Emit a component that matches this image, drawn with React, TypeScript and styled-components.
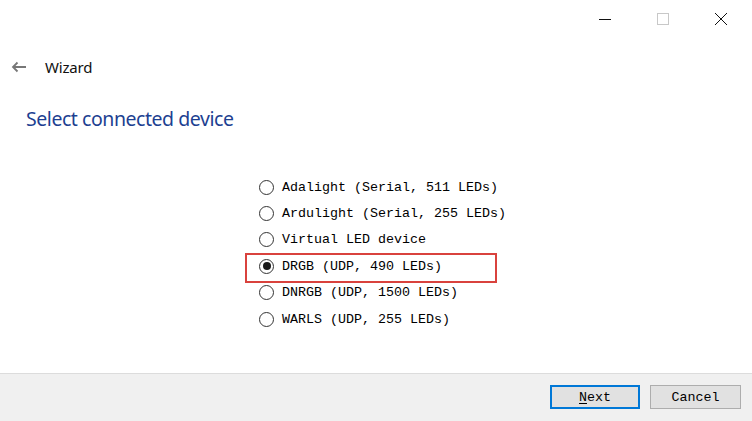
import React, { useState } from 'react'
import styled, { createGlobalStyle } from 'styled-components'

const GlobalStyle = createGlobalStyle`
	html, body {
		margin: 0;
		padding: 0;
		background: #ffffff;
	}
	#root {
		height: 100vh;
	}
`

const Window = styled.div`
	height: 421px;
	width: 752px;
	display: flex;
	flex-direction: column;
	background: #ffffff;
	font-family: 'Noto Sans', 'Open Sans', sans-serif;
	overflow: hidden;
`

const TitleBar = styled.div`
	height: 38px;
	display: flex;
	justify-content: flex-end;
	align-items: center;
	padding-right: 2px;
`

const CaptionButton = styled.div`
	width: 58px;
	height: 38px;
	display: flex;
	align-items: center;
	justify-content: center;
`

const Header = styled.div`
	display: flex;
	align-items: center;
	height: 22px;
	margin-top: 18px;
	padding-left: 10px;
`

const BackIcon = styled.div`
	width: 18px;
	height: 18px;
	display: flex;
	align-items: center;
	justify-content: center;
	margin-right: 17px;
`

const HeaderTitle = styled.div`
	font-size: 15px;
	color: #111;
	letter-spacing: -0.2px;
`

const PageTitle = styled.h1`
	margin: 28px 0 0 26px;
	font-size: 19.5px;
	font-weight: 400;
	color: #1d3f91;
	line-height: 26px;
	letter-spacing: -0.45px;
`

const Content = styled.div`
	flex: 1;
	display: flex;
	flex-direction: column;
	padding: 42px 0 0 259px;
`

const Row = styled.label<{ $highlight?: boolean }>`
	position: relative;
	display: flex;
	align-items: center;
	height: 26.4px;
	font-family: 'Liberation Mono', 'Courier New', monospace;
	font-size: 13.33px;
	color: #000;
	cursor: default;

	${(p) =>
		p.$highlight &&
		`
		&::after {
			content: '';
			position: absolute;
			left: -14px;
			top: 0px;
			width: 252px;
			height: 30px;
			box-sizing: border-box;
			border: 2px solid #d9423d;
			pointer-events: none;
		}
	`}
`

const Radio = styled.span<{ $checked?: boolean }>`
	width: 15px;
	height: 15px;
	box-sizing: border-box;
	border: 1px solid #333;
	border-radius: 50%;
	margin-right: 8px;
	display: flex;
	align-items: center;
	justify-content: center;
	flex-shrink: 0;

	&::before {
		content: '';
		width: 8px;
		height: 8px;
		border-radius: 50%;
		background: ${(p) => (p.$checked ? '#1a1a1a' : 'transparent')};
	}
`

const Footer = styled.div`
	height: 48px;
	box-sizing: border-box;
	border-top: 1px solid #dcdcdc;
	background: #f0f0f0;
	display: flex;
	justify-content: flex-end;
	align-items: flex-start;
	gap: 10px;
	padding: 11px 11px 0 0;
`

const Button = styled.button<{ $default?: boolean }>`
	width: ${(p) => (p.$default ? '90px' : '91px')};
	height: 24px;
	box-sizing: border-box;
	background: #e1e1e1;
	border: ${(p) => (p.$default ? '2px solid #0078d7' : '1px solid #adadad')};
	font-family: 'Liberation Mono', 'Courier New', monospace;
	font-size: 13.33px;
	color: #000;
	padding: 0;
	border-radius: 0;

	u {
		text-underline-offset: 2px;
	}
`

const devices = [
	'Adalight (Serial, 511 LEDs)',
	'Ardulight (Serial, 255 LEDs)',
	'Virtual LED device',
	'DRGB (UDP, 490 LEDs)',
	'DNRGB (UDP, 1500 LEDs)',
	'WARLS (UDP, 255 LEDs)',
]

export default function App() {
	const [selected, setSelected] = useState(3)

	return (
		<Window>
			<GlobalStyle />
			<TitleBar>
				<CaptionButton>
					<svg width="14" height="14" viewBox="0 0 14 14">
						<line x1="1" y1="7.5" x2="13" y2="7.5" stroke="#111" strokeWidth="1" />
					</svg>
				</CaptionButton>
				<CaptionButton>
					<svg width="14" height="14" viewBox="0 0 14 14">
						<rect x="1.5" y="1.5" width="11" height="11" fill="none" stroke="#c8c8c8" strokeWidth="1" />
					</svg>
				</CaptionButton>
				<CaptionButton>
					<svg width="14" height="14" viewBox="0 0 14 14">
						<path d="M1 1 L13 13 M13 1 L1 13" stroke="#111" strokeWidth="1" />
					</svg>
				</CaptionButton>
			</TitleBar>

			<Header>
				<BackIcon>
					<svg width="16" height="12" viewBox="0 0 16 12">
						<path d="M15 6 H2 M6.5 1.5 L2 6 L6.5 10.5" fill="none" stroke="#777" strokeWidth="1.8" />
					</svg>
				</BackIcon>
				<HeaderTitle>Wizard</HeaderTitle>
			</Header>

			<PageTitle>Select connected device</PageTitle>

			<Content>
				{devices.map((d, i) => (
					<Row key={d} $highlight={i === 3} onClick={() => setSelected(i)}>
						<Radio $checked={selected === i} />
						{d}
					</Row>
				))}
			</Content>

			<Footer>
				<Button $default>
					<u>N</u>ext
				</Button>
				<Button>Cancel</Button>
			</Footer>
		</Window>
	)
}
